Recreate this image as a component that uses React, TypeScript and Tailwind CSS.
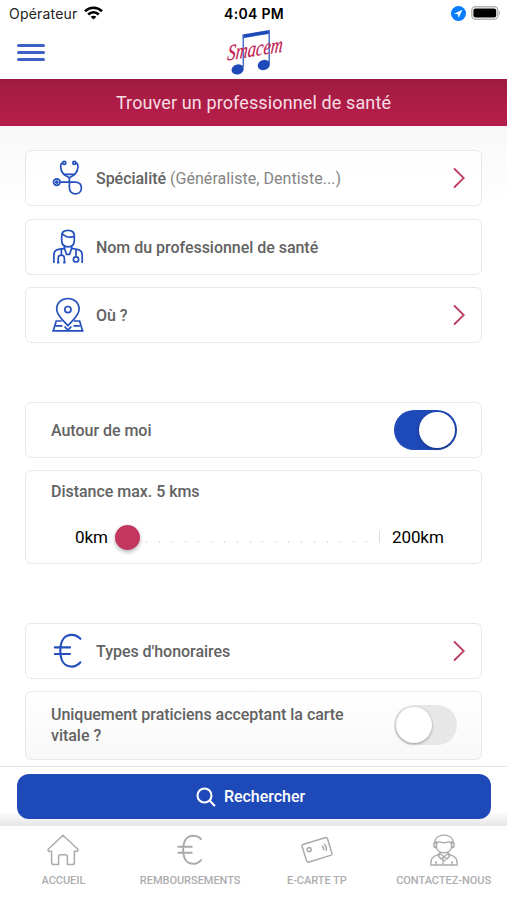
import type { ReactNode } from 'react';

const Wifi = () => (
  <svg width="19" height="14" viewBox="0 0 19 14" fill="none" stroke="#000" strokeWidth="2.7" className="-mt-0.5">
    <path d="M1 5.2C5.8 0.6 13.2 0.6 18 5.2" />
    <path d="M4.2 8.6C7.3 5.7 11.7 5.7 14.8 8.6" />
    <path d="M9.5 13.6 6.6 10.8C8.2 9.4 10.8 9.4 12.4 10.8Z" fill="#000" stroke="none" />
  </svg>
);

const Logo = () => (
  <svg width="62" height="48" viewBox="0 0 62 48" className="-mt-1 overflow-visible">
    <path d="M19.6 6.5 46.8 2V5.8L19.6 10.2Z" fill="#1e49b8" />
    <path d="M20.3 7V39M46.2 3V35" stroke="#4a6fca" strokeWidth="1.5" />
    <ellipse cx="14.6" cy="41.4" rx="6.2" ry="5" fill="#1e49b8" transform="rotate(-18 14.6 41.4)" />
    <ellipse cx="40.8" cy="37" rx="6.2" ry="5" fill="#1e49b8" transform="rotate(-18 40.8 37)" />
    <text
      x="4"
      y="32.5"
      transform="rotate(-9 4 32.5) translate(4 32.5) skewX(-14) translate(-4 -32.5)"
      textLength="56"
      lengthAdjust="spacingAndGlyphs"
      fill="#c02050"
      stroke="#c02050"
      strokeWidth=".2"
      fontSize="22"
      fontStyle="italic"
      fontFamily="'Liberation Serif', serif"
    >
      Smacem
    </text>
  </svg>
);

const Stethoscope = () => (
  <svg width="32" height="36" viewBox="0 0 32 36" fill="none" stroke="#2350bd" strokeWidth="1.7">
    <circle cx="12.3" cy="2.9" r="1.5" />
    <circle cx="22.3" cy="2.9" r="1.5" />
    <path d="M10.7 2.9C8.8 3.1 8.6 4.6 8.7 7.1C8.7 11.6 11 15.1 17.4 17.8C23.5 15.1 25.8 11.6 25.9 7.1C26 4.6 25.8 3.1 23.9 2.9" />
    <path d="M11.5 14.3H23M17.4 17.6V27.8C17.4 36 29.4 35.6 29.4 28C29.4 24.2 26.8 22.1 23 22.1H8" />
    <circle cx="4.8" cy="22.1" r="3.3" />
    <circle cx="4.8" cy="22.1" r="1" />
  </svg>
);

const Doctor = () => (
  <svg width="32" height="36" viewBox="0 0 32 36" fill="none" stroke="#2350bd" strokeWidth="1.7">
    <path d="M9.7 6.8C9.7 3.4 11.9 1.4 16 1.4C20.1 1.4 22.3 3.4 22.3 6.8V11.2C22.3 15.6 19.5 17.8 16 17.8C12.5 17.8 9.7 15.6 9.7 11.2Z" />
    <path d="M9.8 5.4C12 5.2 12.6 7.8 16 8C18.9 8.2 20.3 8 22.2 7.6M12.5 17V19.4M19.6 17V19.4" />
    <path d="M1.9 34V25.8C1.9 21 5.4 20.2 12.4 19.3L14.5 25.3H17.6L19.7 19.3C26 20.2 30.2 21 30.2 25.8V34" />
    <path d="M9.4 20V26.2M6.2 34V29.8C6.2 25 12.4 25 12.4 29.8V34M5 33.6H7.4M11.2 33.6H13.6M24 20.2V27.6" />
    <circle cx="24" cy="30.4" r="2.6" />
  </svg>
);

const MapPin = () => (
  <svg width="32" height="36" viewBox="0 0 32 36" fill="none" stroke="#2350bd" strokeWidth="1.7">
    <path d="M15.9 28.8C10.9 23 4.7 18.3 4.7 12.2C4.7 5.9 9.7 1.5 15.9 1.5C22.1 1.5 27.1 5.9 27.1 12.2C27.1 18.3 20.9 23 15.9 28.8Z" />
    <circle cx="15.9" cy="12.6" r="3.1" />
    <path d="M9.8 24H4.2L1.2 33.9H30.6L27.6 24H22M3.6 28.8H10.4M27.8 28.8H21.5M12.5 29.5 15.9 33.2 19.3 29.5" />
  </svg>
);

const Euro = ({ small = false }: { small?: boolean }) => (
  <svg
    width={small ? 30 : 32}
    height={small ? 32 : 36}
    viewBox="0 0 32 36"
    fill="none"
    stroke={small ? '#a9aaac' : '#2350bd'}
    strokeWidth="2.2"
    strokeLinecap="round"
  >
    <path d="M28.4 5.8C25.8 3 23.2 1.9 19.6 1.9C12.6 1.9 8.3 7.8 8.3 17.8C8.3 27.8 12.6 33.6 19.6 33.6C23.2 33.6 25.8 32.3 28.4 29.3M2.9 14.4H18M2.9 21H18" />
  </svg>
);

const Home = () => (
  <svg width="32" height="32" viewBox="0 0 32 32" fill="none" stroke="#a9aaac" strokeWidth="1.5" strokeLinejoin="round">
    <path d="M16 1.2 1.5 15C.4 16.3 1.5 17.9 3.2 17.3H4.6V28.5Q4.6 30.6 6.8 30.6H11.6V22.9Q11.6 20.8 14 20.8H18Q20.4 20.8 20.4 22.9V30.6H25.2Q27.4 30.6 27.4 28.5V17.3H28.8C30.5 17.9 31.6 16.3 30.5 15Z" />
  </svg>
);

const Card = () => (
  <svg width="32" height="32" viewBox="0 0 32 32" fill="none" stroke="#a9aaac" strokeWidth="1.5">
    <g transform="rotate(-17 16 16)">
      <rect x="2.8" y="6.6" width="26.5" height="18.5" rx="2" />
      <circle cx="8.6" cy="13.4" r="2" />
      <path d="M22 13.6Q23.6 15.8 22 18M24.3 12Q26.8 15.8 24.3 19.6" />
    </g>
  </svg>
);

const Contact = () => (
  <svg width="28" height="32" viewBox="0 0 28 32" fill="none" stroke="#a9aaac" strokeWidth="1.4">
    <path d="M4.6 8.5C5 3.8 8.9 1.1 14 1.1C19.1 1.1 23 3.8 23.4 8.5M6.4 10C8 7.8 9.2 7.4 11 8.2C13 9 15 9 17 8.2C18.8 7.4 20 7.8 21.6 10" />
    <path d="M6.4 8.5V12C6.4 16.2 9.6 18.7 14 18.7C18.4 18.7 21.6 16.2 21.6 12V8.5M6.2 7.8C3 7.8 3 13.8 6.2 13.8ZM21.8 7.8C25 7.8 25 13.8 21.8 13.8Z" />
    <path d="M10 17.8V19.5L14 22.8L18 19.5V17.8M10 19.5 7 21.2C3 22.4 .9 24 .9 28.5V31H27.1V28.5C27.1 24 25 22.4 21 21.2L18 19.5M10 19.5 8.4 22 11 25 14 22.8 17 25 19.6 22 18 19.5M13 23.5V30.7M6 27V30.7M22 27V30.7M13 26.5H16" />
  </svg>
);

const Chevron = () => (
  <svg width="12" height="22" viewBox="0 0 12 22" fill="none" stroke="#bd3a60" strokeWidth="1.8" strokeLinecap="round">
    <path d="M1.6 2 10.8 11 1.6 20" />
  </svg>
);

const Row = ({ icon, children, arrow = false }: { icon: ReactNode; children: ReactNode; arrow?: boolean }) => (
  <div className="flex h-14 items-center rounded-md border border-[#e8e8e8] bg-white/70 pr-4 pl-[26px]">
    {icon}
    <span className="mt-0.5 ml-3 flex-1">{children}</span>
    {arrow && <Chevron />}
  </div>
);

const Toggle = ({ on = false }: { on?: boolean }) => (
  <div
    className={`flex h-10 w-[63px] shrink-0 items-center rounded-full px-0.5 ${on ? 'justify-end bg-[#1e49b8]' : 'justify-start bg-[#e7e7e7]'}`}
  >
    <div className="size-9 rounded-full bg-white shadow-[0_1px_3px_rgba(0,0,0,0.35)]" />
  </div>
);

const tabs = [
  { label: 'ACCUEIL', icon: <Home /> },
  { label: 'REMBOURSEMENTS', icon: <Euro small /> },
  { label: 'E-CARTE TP', icon: <Card /> },
  { label: 'CONTACTEZ-NOUS', icon: <Contact /> },
];

const ticks = Array.from({ length: 18 });

const App = () => {
  return (
    <div className="flex h-[900px] w-[507px] flex-col overflow-hidden bg-white font-['Roboto',sans-serif] text-base font-medium tracking-[-0.03px] text-[#626262]">
      <header className="h-[79px] shrink-0 bg-white">
        <div className="grid h-7 grid-cols-3 items-center pr-[6px] pl-[9px] font-['Inter',sans-serif] text-sm text-black">
          <div className="flex items-center gap-1.5 font-normal tracking-[0.2px] text-[#222]">
            Opérateur <Wifi />
          </div>
          <div className="-ml-0.5 text-center font-semibold tracking-[0.3px]">4:04 PM</div>
          <div className="flex items-center justify-end gap-[5px]">
            <svg width="15" height="15" viewBox="0 0 15 15" className="-mt-0.5">
              <circle cx="7.5" cy="7.5" r="7.5" fill="#087cff" />
              <path d="M3 7.8 11.4 3.7 7.6 12 7 8.3Z" fill="#fff" />
            </svg>
            <svg width="30" height="14" viewBox="0 0 30 14" className="-mt-0.5">
              <rect x=".8" y=".8" width="26" height="12.4" rx="3.5" fill="#fff" stroke="#b3b3ae" strokeWidth="1.4" />
              <rect x="2.4" y="2.4" width="22.8" height="9.2" rx="2" />
              <path d="M28 4.7Q30 7 28 9.3Z" fill="#a5a5a5" />
            </svg>
          </div>
        </div>
        <div className="grid h-[51px] grid-cols-3 items-center pr-4 pl-[17px]">
          <div className="-mt-0.5 flex w-7 flex-col gap-[4.7px]">
            <div className="h-[2.5px] rounded bg-[#3d61c4]" />
            <div className="h-[2.5px] rounded bg-[#3d61c4]" />
            <div className="h-[2.5px] rounded bg-[#3d61c4]" />
          </div>
          <div className="flex justify-center">
            <Logo />
          </div>
        </div>
      </header>

      <div className="flex h-[46.5px] shrink-0 items-center justify-center bg-linear-to-b from-[#9d1b3f] via-[#ae1d47] to-[#b51e4a] pt-px text-lg font-normal tracking-[0.12px] text-[#f7dde4]">
        Trouver un professionnel de santé
      </div>

      <main className="flex h-[640px] shrink-0 flex-col bg-linear-to-b from-[#f8f8f8] via-white via-12% to-white px-[25px] pt-[24.6px]">
        <section className="flex flex-col gap-[12.5px]">
          <Row icon={<Stethoscope />} arrow>
            Spécialité <span className="font-normal tracking-[0.04px] text-[#858585]">(Généraliste, Dentiste...)</span>
          </Row>
          <Row icon={<Doctor />}>Nom du professionnel de santé</Row>
          <Row icon={<MapPin />} arrow>
            Où ?
          </Row>
        </section>

        <section className="mt-[58.9px] flex flex-col gap-3">
          <div className="flex h-14 items-center justify-between rounded-md border border-[#e8e8e8] pr-6 pl-[25px]">
            <span className="mt-0.5">Autour de moi</span>
            <Toggle on />
          </div>
          <div className="h-[94px] rounded-md border border-[#e8e8e8] pt-[9px] pl-[25px]">
            <div className="leading-6">Distance max. 5 kms</div>
            <div className="mt-[21px] flex items-center pl-[25px] text-[17px] leading-6 font-normal tracking-[-0.1px] text-black">
              <span className="-ml-px w-10">0km</span>
              <div className="size-[25px] rounded-full bg-[#c3365f] shadow-[0_2px_4px_rgba(0,0,0,0.3)]" />
              <div className="mt-[9px] ml-[6px] flex w-[221px] justify-between">
                {ticks.map((_, i) => (
                  <div key={i} className="h-0.5 w-px bg-[#dedede]" />
                ))}
              </div>
              <div className="ml-[12px] h-3 w-px bg-[#dcdcdc]" />
              <span className="ml-[12px]">200km</span>
            </div>
          </div>
        </section>

        <section className="mt-[59px] flex flex-col gap-3">
          <Row icon={<Euro />} arrow>
            Types d'honoraires
          </Row>
          <div className="flex h-[69px] items-center justify-between rounded-md border border-[#e8e8e8] bg-linear-to-b from-white to-[#f8f8f8] pr-6 pl-[25px]">
            <span className="w-[310px] leading-[21px]">Uniquement praticiens acceptant la carte vitale ?</span>
            <Toggle />
          </div>
        </section>
      </main>

      <div className="h-[60.5px] shrink-0 border-t border-[#e4e4e4] bg-linear-to-b from-white via-white via-75% to-[#e6e6e6] pr-4 pl-[17px] pt-[7.5px]">
        <button className="flex h-[45px] w-full items-center justify-center gap-2 rounded-xl bg-[#1e49b8] pr-[7px] text-white">
          <svg width="20" height="20" viewBox="0 0 20 20" fill="none" stroke="#fff" strokeWidth="2.1" strokeLinecap="round">
            <circle cx="8.5" cy="8.5" r="7" />
            <path d="M13.6 13.6 18.4 18.4" />
          </svg>
          Rechercher
        </button>
      </div>

      <nav className="grid h-[74px] shrink-0 grid-cols-4 bg-white pt-[7.5px] text-[11px] text-[#adadaf]">
        {tabs.map((tab) => (
          <div key={tab.label} className="flex flex-col items-center">
            {tab.icon}
            <span className="mt-[7px]">{tab.label}</span>
          </div>
        ))}
      </nav>
    </div>
  );
};

export default App;
